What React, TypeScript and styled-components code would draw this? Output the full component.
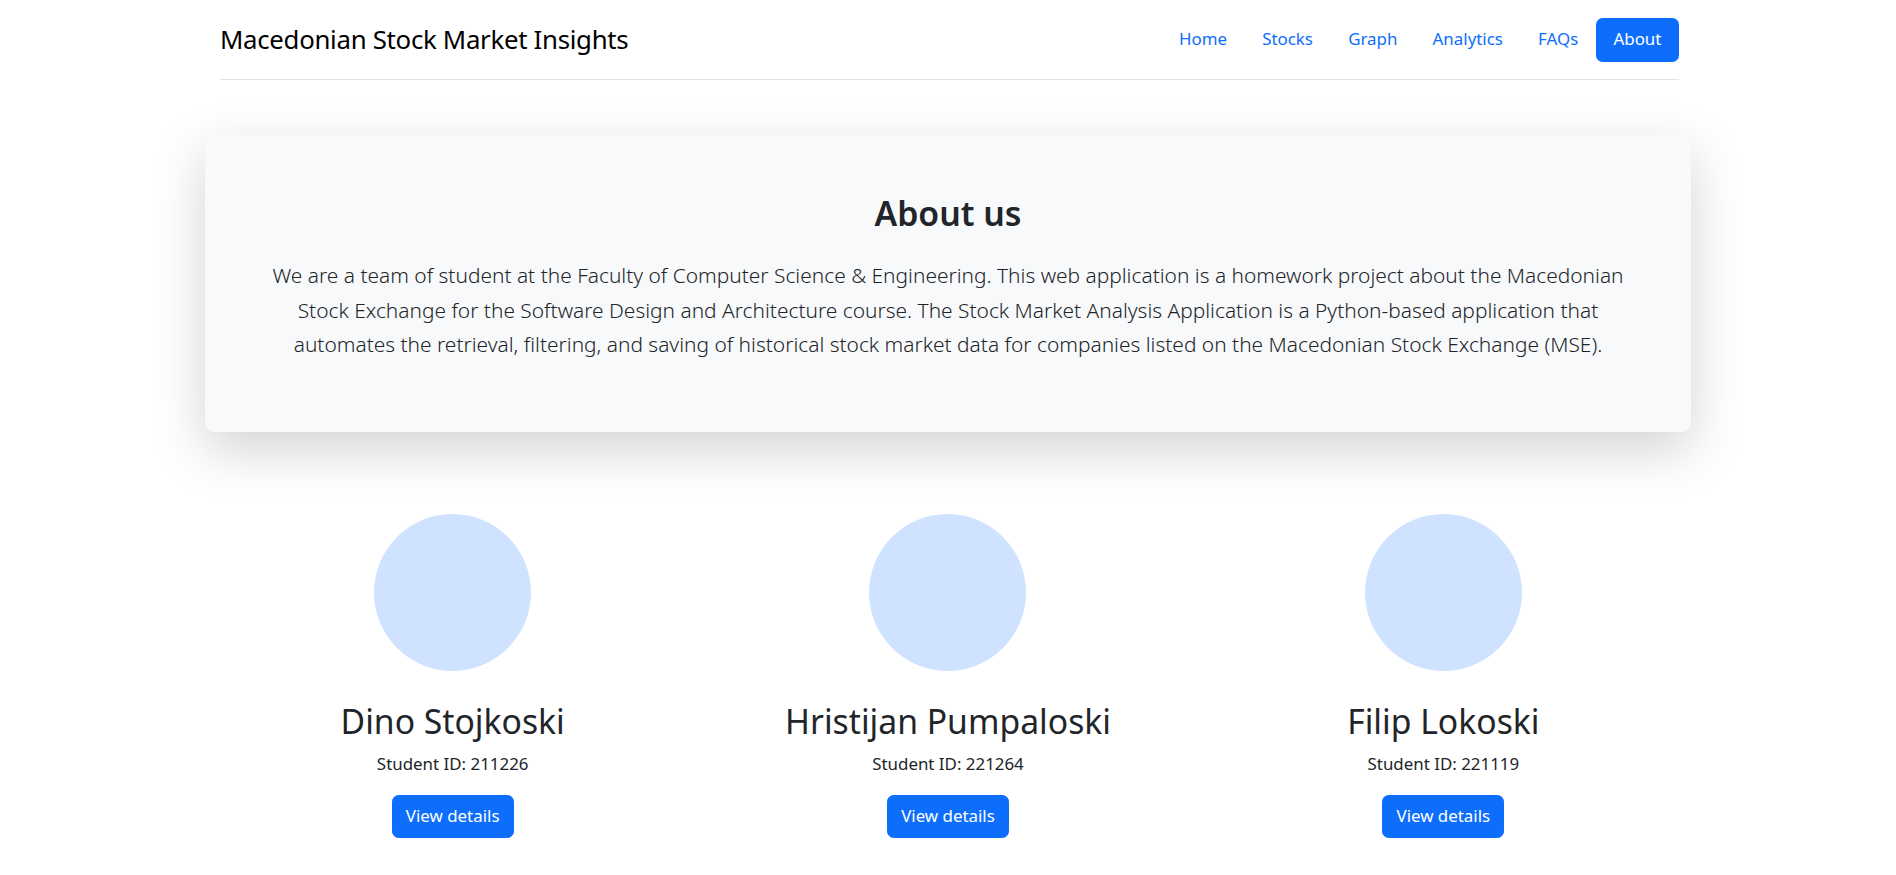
import React from "react";
import styled, { createGlobalStyle } from "styled-components";

const GlobalStyle = createGlobalStyle`
  html, body {
    margin: 0;
    padding: 0;
    background: #ffffff;
  }
  body {
    font-family: "Noto Sans", "Open Sans", sans-serif;
    color: #212529;
    font-size: 16.9px;
    line-height: 1.5;
  }
  * { box-sizing: border-box; }
`;

const Page = styled.div`
  width: 1486px;
  margin: 0 auto;
  padding-bottom: 40px;
`;

const Header = styled.header`
  margin: 0 12px 0 15px;
  display: flex;
  align-items: center;
  justify-content: space-between;
  padding: 17.6px 0;
  border-bottom: 1px solid #dee2e6;
`;

const Brand = styled.a`
  font-size: 25.8px;
  line-height: 1.2;
  color: #000;
  text-decoration: none;
  letter-spacing: -0.3px;
`;

const Nav = styled.nav`
  display: flex;
  align-items: center;
`;

const NavLink = styled.a<{ $active?: boolean }>`
  display: block;
  padding: 8.8px 17.6px;
  font-size: 16.9px;
  line-height: 26.4px;
  border-radius: 6.6px;
  text-decoration: none;
  color: ${(p) => (p.$active ? "#fff" : "#0d6efd")};
  background: ${(p) => (p.$active ? "#0d6efd" : "transparent")};
`;

const Jumbo = styled.section`
  margin-top: 55px;
  background: #f8f9fa;
  border-radius: 8.8px;
  box-shadow: 0 17.6px 52.8px rgba(0, 0, 0, 0.175);
  padding: 57px 52.8px 53px;
  text-align: center;
`;

const JumboTitle = styled.h2`
  margin: 0 0 24px;
  font-size: 33.8px;
  line-height: 42px;
  font-weight: 600;
  color: #212529;
`;

const Lead = styled.p`
  margin: 0 auto 17.6px;
  max-width: 1380px;
  font-size: 20.9px;
  line-height: 34.5px;
  font-weight: 300;
  color: #212529;
`;

const Team = styled.div`
  margin-top: 82px;
  display: grid;
  grid-template-columns: repeat(3, 1fr);
`;

const Member = styled.div`
  display: flex;
  flex-direction: column;
  align-items: center;
  text-align: center;
`;

const Avatar = styled.div`
  width: 157px;
  height: 157px;
  border-radius: 50%;
  background: #cfe2ff;
`;

const Name = styled.h2`
  margin: 29px 0 8.8px;
  font-size: 33.7px;
  line-height: 42.2px;
  font-weight: 400;
  color: #212529;
`;

const StudentId = styled.p`
  margin: 0 0 17.6px;
  font-size: 16.9px;
  line-height: 26.4px;
`;

const DetailsButton = styled.a`
  display: inline-block;
  padding: 7.2px 13.2px;
  font-size: 16.9px;
  line-height: 26.4px;
  color: #fff;
  background: #0d6efd;
  border: 1px solid #0d6efd;
  border-radius: 6.6px;
  text-decoration: none;
`;

const links = ["Home", "Stocks", "Graph", "Analytics", "FAQs", "About"];

const members = [
  { name: "Dino Stojkoski", id: "211226" },
  { name: "Hristijan Pumpaloski", id: "221264" },
  { name: "Filip Lokoski", id: "221119" },
];

export default function App() {
  return (
    <>
      <GlobalStyle />
      <Page>
        <Header>
          <Brand href="#">Macedonian Stock Market Insights</Brand>
          <Nav>
            {links.map((l) => (
              <NavLink key={l} href="#" $active={l === "About"}>
                {l}
              </NavLink>
            ))}
          </Nav>
        </Header>
        <Jumbo>
          <JumboTitle>About us</JumboTitle>
          <Lead>
            We are a team of student at the Faculty of Computer Science &amp; Engineering. This web
            application is a homework project about the Macedonian Stock Exchange for the Software
            Design and Architecture course. The Stock Market Analysis Application is a Python-based
            application that automates the retrieval, filtering, and saving of historical stock
            market data for companies listed on the Macedonian Stock Exchange (MSE).
          </Lead>
        </Jumbo>
        <Team>
          {members.map((m) => (
            <Member key={m.id}>
              <Avatar />
              <Name>{m.name}</Name>
              <StudentId>Student ID: {m.id}</StudentId>
              <DetailsButton href="#">View details</DetailsButton>
            </Member>
          ))}
        </Team>
      </Page>
    </>
  );
}
